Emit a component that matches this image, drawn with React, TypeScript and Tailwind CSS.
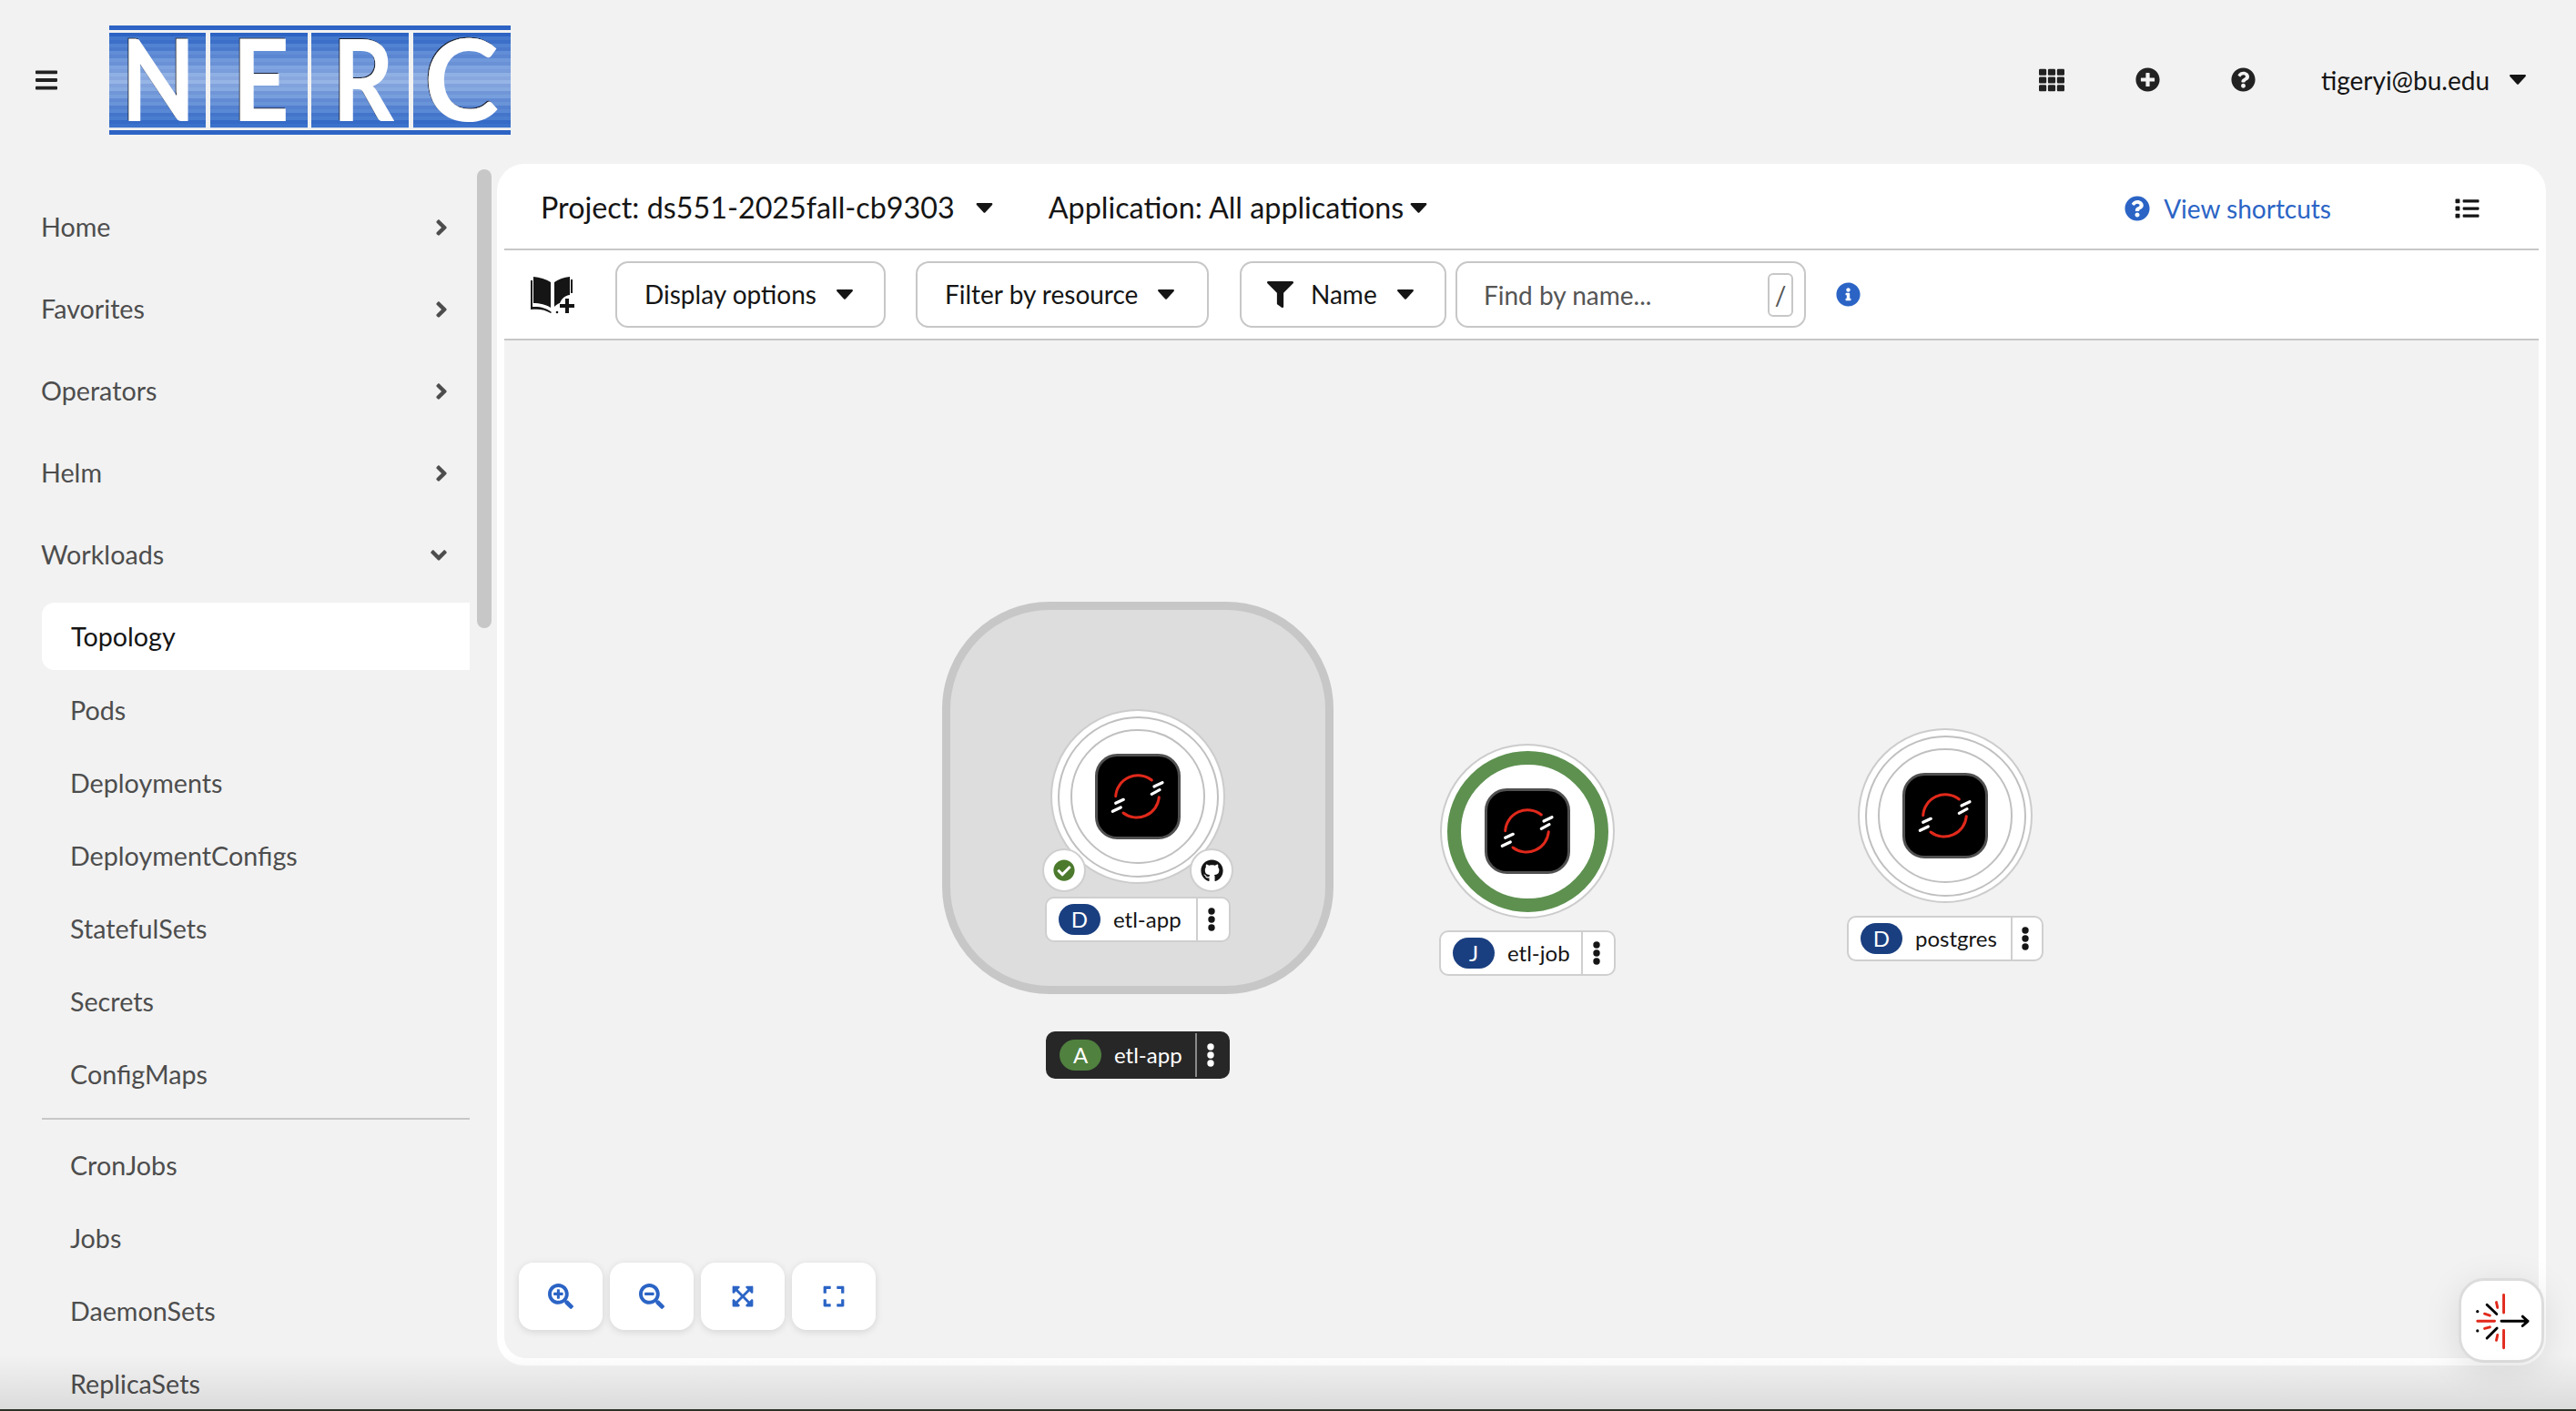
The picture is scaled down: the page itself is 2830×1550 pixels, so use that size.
import { FaAngleDown, FaAngleRight, FaBars, FaCheckCircle, FaExpand, FaExpandArrowsAlt, FaFilter, FaGithub, FaInfoCircle, FaList, FaPlusCircle, FaQuestionCircle, FaSearchMinus, FaSearchPlus, FaTh } from 'react-icons/fa'
import clsx from 'clsx'
import type { ReactNode } from 'react'

const TOP_NAV = ['Home', 'Favorites', 'Operators', 'Helm']
const WORKLOADS_A = ['Pods', 'Deployments', 'DeploymentConfigs', 'StatefulSets', 'Secrets', 'ConfigMaps']
const WORKLOADS_B = ['CronJobs', 'Jobs', 'DaemonSets', 'ReplicaSets']

// logo stripes, dark at the edges and pale in the middle
const STRIPES = Array.from({ length: 26 }, (_, i) => {
  const t = 1 - Math.abs(i - 12.5) / 12.5
  const wobble = i % 2 === 0 ? 0 : 14
  return `rgb(${45 + t * 95 + wobble}, ${100 + t * 70 + wobble}, ${196 + t * 28 + wobble / 2})`
})

function Caret({ className }: { className?: string }) {
  return (
    <svg viewBox="0 0 18 11" className={clsx('w-[18px] h-[11px] shrink-0', className)}>
      <path d="M1.2 0h15.6c1 0 1.5 1.1.8 1.9L9.8 10.4c-.4.5-1.2.5-1.6 0L.4 1.9C-.3 1.1.2 0 1.2 0z" fill="currentColor" />
    </svg>
  )
}

function Kebab({ className }: { className?: string }) {
  return (
    <svg viewBox="0 0 8 26" className={clsx('w-[8px] h-[26px]', className)}>
      <circle cx="4" cy="4" r="3.7" fill="currentColor" />
      <circle cx="4" cy="13" r="3.7" fill="currentColor" />
      <circle cx="4" cy="22" r="3.7" fill="currentColor" />
    </svg>
  )
}

function Logo() {
  const tiles = [
    { x: 0, w: 106, letter: 'N', tx: 13, tw: 82 },
    { x: 111, w: 107, letter: 'E', tx: 135, tw: 63 },
    { x: 222, w: 107, letter: 'R', tx: 245, tw: 68 },
    { x: 334, w: 107, letter: 'C', tx: 346, tw: 82 },
  ]
  return (
    <svg viewBox="0 0 441 120" className="w-[441px] h-[120px] ml-[57px] overflow-visible">
      <defs>
        <filter id="edge" x="-5%" y="-5%" width="110%" height="110%">
          <feDropShadow dx="-1" dy="-1" stdDeviation="0" floodColor="#1c2333" />
        </filter>
      </defs>
      <rect x="0" y="0" width="441" height="5" fill="#2d63c4" />
      <rect x="0" y="115" width="441" height="5" fill="#2d63c4" />
      {tiles.map(tile => (
        <g key={tile.letter}>
          {STRIPES.map((color, i) => (
            <rect key={i} x={tile.x} y={8 + i * 4} width={tile.w} height="4.2" fill={color} />
          ))}
          <text
            x={tile.tx}
            y="105"
            textLength={tile.tw}
            lengthAdjust="spacingAndGlyphs"
            fontFamily="Lato, sans-serif"
            fontSize="124"
            fontWeight="700"
            fill="#fff"
            filter="url(#edge)"
          >
            {tile.letter}
          </text>
        </g>
      ))}
    </svg>
  )
}

function NavGroup({ label, open }: { label: string; open?: boolean }) {
  return (
    <div className="flex items-center justify-between h-[90px] pt-[2px] pl-[45px] pr-[54px] text-[28.700px] text-[#4d4d4d]">
      <span>{label}</span>
      {open ? <FaAngleDown className="w-[20px] h-[28px]" /> : <FaAngleRight className="w-[14px] h-[28px]" />}
    </div>
  )
}

function NavItem({ label }: { label: string }) {
  return <div className="flex items-center h-[80px] pt-[2px] pl-[77px] text-[28.700px] text-[#4d4d4d]">{label}</div>
}

function Sidebar() {
  return (
    <aside className="relative w-[546px] shrink-0 pt-[24px]">
      {TOP_NAV.map(label => (
        <NavGroup key={label} label={label} />
      ))}
      <NavGroup label="Workloads" open />
      <div className="flex items-center h-[74px] ml-[46px] w-[470px] mt-[8px] mb-[4px] pt-[2px] pl-[32px] text-[28.700px] text-[#151515] bg-white rounded-l-[14px]">
        Topology
      </div>
      {WORKLOADS_A.map(label => (
        <NavItem key={label} label={label} />
      ))}
      <div className="h-[2px] ml-[46px] w-[470px] mt-[8px] mb-[10px] bg-[#c7c7c7]" />
      {WORKLOADS_B.map(label => (
        <NavItem key={label} label={label} />
      ))}
      {/* scrollbar */}
      <div className="absolute left-[524px] top-[6px] w-[16px] h-[504px] rounded-full bg-[#c7c7c7]" />
    </aside>
  )
}

function BookIcon() {
  return (
    <svg viewBox="0 0 49 42" className="w-[49px] h-[42px] ml-[1px] shrink-0 text-[#151515]">
      <path d="M3 1c7 .5 14 2.500 19 6v28c-5-3.500-12-5-19-5z" fill="currentColor" />
      <path d="M26 7c5-3.500 10-5.500 17-6v20c-5 .5-9 4-11 9-2 .5-4 2-6 4z" fill="currentColor" />
      <path d="M0 5h2v29c8-.5 15 1 21 6l-1 1c-6-4-13-5-22-4z" fill="currentColor" />
      <path d="M44 4h2v15h-2z" fill="currentColor" />
      <path d="M38 25h4v6h6v4h-6v6h-4v-6h-6v-4h6z" fill="currentColor" />
      <circle cx="29" cy="40" r="1.300" fill="currentColor" />
    </svg>
  )
}

function ToolButton({ className, children }: { className?: string; children: ReactNode }) {
  return (
    <div className={clsx('flex items-center h-[73px] border-2 border-[#c7c7c7] rounded-[14px] text-[#151515] text-[28px] leading-none', className)}>
      {children}
    </div>
  )
}

function ProjectBar() {
  return (
    <div className="flex items-center h-[95px] pt-[4px] pl-[40px] pr-[64px] border-b-2 border-[#c7c7c7] text-[32.300px] text-[#151515]">
      <span>Project: ds551-2025fall-cb9303</span>
      <Caret className="ml-[23px] w-[19px]" />
      <span className="ml-[61px]">Application: All applications</span>
      <Caret className="ml-[7px] w-[19px]" />
      <div className="flex items-center ml-auto text-[#2b64c5] text-[28px]">
        <FaQuestionCircle className="w-[28px] h-[28px]" />
        <span className="ml-[15px]">View shortcuts</span>
      </div>
      <FaList className="ml-[135px] w-[29px] h-[26px]" />
    </div>
  )
}

function FilterBar() {
  return (
    <div className="flex items-center h-[99px] pl-[28px] border-b-2 border-[#c7c7c7]">
      <BookIcon />
      <ToolButton className="ml-[44px] w-[297px] pl-[30px] pb-[2px]">
        <span>Display options</span>
        <Caret className="ml-[22px] mt-[2px]" />
      </ToolButton>
      <ToolButton className="ml-[33px] w-[322px] pl-[30px] pb-[2px]">
        <span>Filter by resource</span>
        <Caret className="ml-[22px] mt-[2px]" />
      </ToolButton>
      <ToolButton className="ml-[34px] w-[227px] pl-[28px] pb-[2px]">
        <FaFilter className="w-[29px] h-[29px] mt-[2px]" />
        <span className="ml-[19px]">Name</span>
        <Caret className="ml-[22px] mt-[2px]" />
      </ToolButton>
      <ToolButton className="ml-[10px] w-[385px] pl-[29px] pr-[12px] justify-between">
        <span className="text-[#555555]">Find by name...</span>
        <span className="flex items-center justify-center w-[28px] h-[48px] border-2 border-[#c7c7c7] rounded-[6px] text-[#555555]">/</span>
      </ToolButton>
      <FaInfoCircle className="ml-[33px] w-[27px] h-[27px] text-[#2b64c5]" />
    </div>
  )
}

function ShiftIcon({ className }: { className?: string }) {
  return (
    <svg viewBox="0 0 94 94" className={clsx('w-[94px] h-[94px]', className)}>
      <rect x="1.500" y="1.500" width="91" height="91" rx="23" fill="#000" stroke="#505050" strokeWidth="3" />
      <g fill="none" stroke="#e1291b" strokeWidth="3" strokeLinecap="round">
        <path d="M22.700 46.700A24.500 24.500 0 0 1 62.300 29" />
        <path d="M70.300 47.700A24.500 24.500 0 0 1 31 65" />
      </g>
      <g stroke="#fff" strokeWidth="3.200" strokeLinecap="round">
        <path d="M65 36l9-4.300" />
        <path d="M62.300 44.300l8.700-4.600" />
        <path d="M22.700 54.300l8.600-4" />
        <path d="M19.300 63.300l9-4.300" />
      </g>
    </svg>
  )
}

function NodeCircle({ className, ring }: { className: string; ring: 'plain' | 'green' }) {
  return (
    <div className={clsx('absolute flex items-center justify-center w-[192px] h-[192px] rounded-full bg-white border-2 border-[#cccccc]', className)}>
      {ring === 'plain' ? (
        <div className="flex items-center justify-center w-[177px] h-[177px] rounded-full border-2 border-[#c0c0c0]">
          <div className="flex items-center justify-center w-[148px] h-[148px] rounded-full border-2 border-[#c0c0c0]">
            <ShiftIcon />
          </div>
        </div>
      ) : (
        <div className="flex items-center justify-center w-[177px] h-[177px] rounded-full border-[15px] border-[#5e9150]">
          <ShiftIcon />
        </div>
      )}
    </div>
  )
}

type NodeLabelProps = {
  className: string
  kind: string
  name: string
  cell: string
  dark?: boolean
}

function NodeLabel({ className, kind, name, cell, dark }: NodeLabelProps) {
  return (
    <div
      className={clsx(
        'absolute flex items-stretch rounded-[10px] border-2 text-[24px]',
        dark ? 'bg-[#272727] border-[#272727] text-white' : 'bg-white border-[#cfcfcf] text-[#151515]',
        className,
      )}
    >
      <div className={clsx('flex items-center pl-[13px]', cell)}>
        <span
          className={clsx(
            'flex items-center justify-center w-[46px] h-[34px] rounded-full text-white',
            dark ? 'bg-[#50813f]' : 'bg-[#1a3f80]',
          )}
        >
          {kind}
        </span>
        <span className="ml-[14px]">{name}</span>
      </div>
      <div className={clsx('flex flex-1 items-center justify-center pr-[5px] border-l-2', dark ? 'border-[#8a8a8a]' : 'border-[#cfcfcf]')}>
        <Kebab />
      </div>
    </div>
  )
}

function Badge({ className, children }: { className: string; children: ReactNode }) {
  return (
    <div className={clsx('absolute flex items-center justify-center w-[48px] h-[48px] rounded-full bg-white border-2 border-[#cfcfcf]', className)}>
      {children}
    </div>
  )
}

function ZoomButton({ children }: { children: ReactNode }) {
  return (
    <div className="flex items-center justify-center w-[92px] h-[74px] rounded-[16px] bg-white text-[#2b64c5] shadow-[0_2px_8px_rgba(0,0,0,0.12)]">
      {children}
    </div>
  )
}

function Topology() {
  return (
    <div className="relative flex-1 bg-[#f2f2f2] rounded-bl-[24px] rounded-br-[24px]">
      {/* application group */}
      <div className="absolute left-[481px] top-[287px] w-[430px] h-[431px] rounded-[118px] bg-[#dddddd] border-[9px] border-[#c7c7c7]" />
      <NodeCircle className="left-[600px] top-[405px]" ring="plain" />
      <Badge className="left-[591px] top-[558px]">
        <FaCheckCircle className="w-[24px] h-[24px] text-[#4c7a2d]" />
      </Badge>
      <Badge className="left-[753px] top-[558px]">
        <FaGithub className="w-[25px] h-[25px] text-[#151515]" />
      </Badge>
      <NodeLabel className="left-[594px] top-[611px] w-[204px] h-[50px]" cell="w-[164px]" kind="D" name="etl-app" />
      <NodeLabel className="left-[595px] top-[759px] w-[202px] h-[52px]" cell="w-[162px]" kind="A" name="etl-app" dark />

      <NodeCircle className="left-[1028px] top-[443px]" ring="green" />
      <NodeLabel className="left-[1027px] top-[648px] w-[194px] h-[50px]" cell="w-[154px]" kind="J" name="etl-job" />

      <NodeCircle className="left-[1487px] top-[426px]" ring="plain" />
      <NodeLabel className="left-[1475px] top-[632px] w-[216px] h-[50px]" cell="w-[178px]" kind="D" name="postgres" />

      <div className="absolute left-[16px] bottom-[31px] flex gap-[8px]">
        <ZoomButton>
          <FaSearchPlus className="w-[28px] h-[28px]" />
        </ZoomButton>
        <ZoomButton>
          <FaSearchMinus className="w-[28px] h-[28px]" />
        </ZoomButton>
        <ZoomButton>
          <FaExpandArrowsAlt className="w-[26px] h-[26px]" />
        </ZoomButton>
        <ZoomButton>
          <FaExpand className="w-[26px] h-[26px]" />
        </ZoomButton>
      </div>
    </div>
  )
}

function GuideButton() {
  return (
    <div className="absolute left-[2701px] top-[1404px] w-[94px] h-[93px] rounded-[28px] bg-white border-[3px] border-[#dcdcdc] shadow-[0_8px_40px_rgba(0,0,0,0.10)]">
      <svg viewBox="188 139 272 267" className="w-full h-full" fill="none" strokeLinecap="round">
        <g stroke="#e1291b" strokeWidth="9">
          <path d="M332 186v60M332 306v60M243 275h58" />
          <path d="M307 211l4 18M307 340l4-18M267 250l18 6M267 300l18-5" />
        </g>
        <g stroke="#000" strokeWidth="9" strokeLinejoin="round">
          <path d="M275 219l33 32M275 333l34-34M324 275h90M396 259l18 16-18 16" />
        </g>
        <circle cx="243" cy="242" r="5" fill="#000" />
        <circle cx="243" cy="308" r="5" fill="#000" />
      </svg>
    </div>
  )
}

export default function App() {
  return (
    <div className="relative w-[2830px] h-[1550px] overflow-hidden bg-[#f2f2f2] font-['Lato',sans-serif]">
      {/* Masthead */}
      <header className="flex items-center h-[180px] pb-[5px] pl-[39px] text-[#151515]">
        <FaBars className="w-[24px] h-[28px] text-[#222222]" />
        <Logo />
        <div className="flex items-center ml-auto pr-[55px]">
          <FaTh className="w-[28px] h-[28px] text-[#222222]" />
          <FaPlusCircle className="ml-[78px] w-[27px] h-[27px] text-[#222222]" />
          <FaQuestionCircle className="ml-[78px] w-[27px] h-[27px] text-[#222222]" />
          <span className="ml-[72px] text-[28px]">tigeryi@bu.edu</span>
          <Caret className="ml-[22px]" />
        </div>
      </header>

      <div className="flex">
        <Sidebar />
        <main className="flex flex-col w-[2251px] h-[1320px] px-[8px] pb-[8px] bg-white rounded-[30px]">
          <ProjectBar />
          <FilterBar />
          <Topology />
        </main>
      </div>

      <GuideButton />

      {/* window shadow at the bottom edge */}
      <div className="absolute left-0 right-0 bottom-[2px] h-[60px] bg-gradient-to-b from-transparent to-[#00000018] pointer-events-none" />
      <div className="absolute left-0 right-0 bottom-0 h-[2px] bg-[#2b3024]" />
    </div>
  )
}
